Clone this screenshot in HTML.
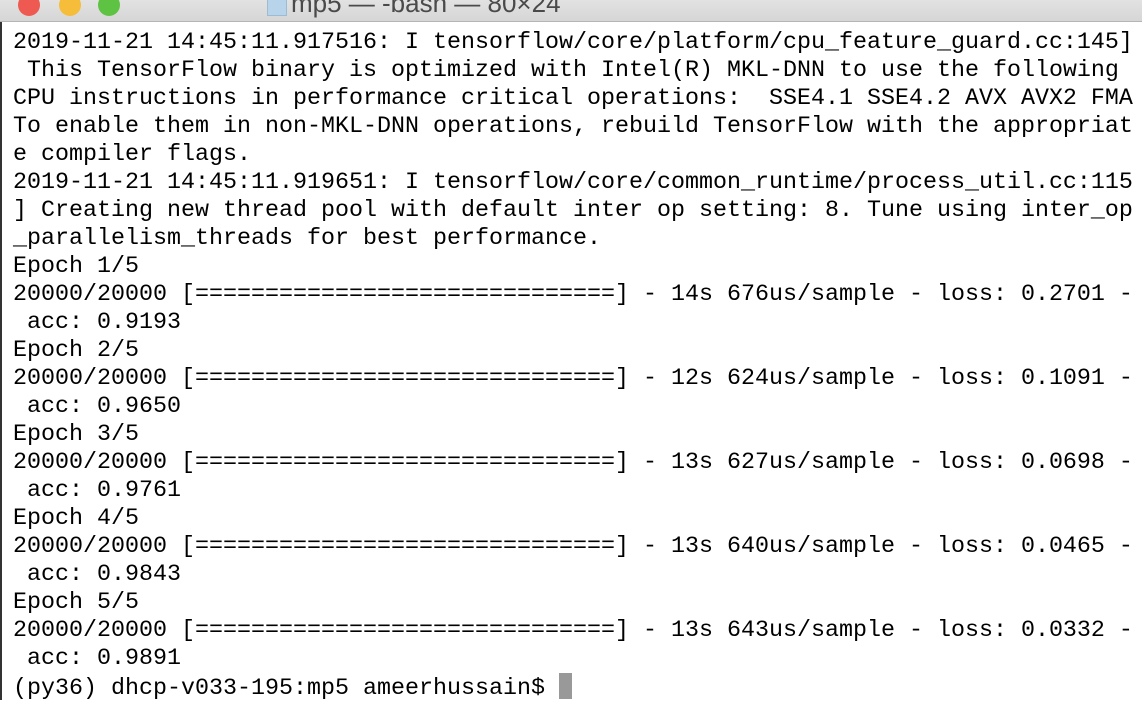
<!DOCTYPE html><html><head><style>
html,body{margin:0;padding:0;width:1142px;height:700px;overflow:hidden;background:#fff}
.bar{position:absolute;left:0;top:0;width:1142px;height:21px;background:linear-gradient(#e2e2e2,#d6d6d6);border-bottom:1px solid #b5b5b5}
.dot{position:absolute;top:-6px;width:22px;height:22px;border-radius:50%}
.title{position:absolute;left:267px;top:-12px;font:26px "Liberation Sans",sans-serif;color:#4a4a4a;white-space:nowrap}
.title i{display:inline-block;width:18px;height:22px;background:#b7d4ea;border:1px solid #9cbcd6;margin-right:4px;vertical-align:-4px}
.lb{position:absolute;left:0;top:22px;width:2px;height:678px;background:#333}
pre{position:absolute;left:13px;top:29px;margin:0;font:23.33px/28px "Liberation Mono",monospace;color:#000;letter-spacing:0}
.cur{display:inline-block;width:13px;height:26px;background:#999;vertical-align:-5px}
</style></head><body>
<div class="bar"><div class="dot" style="left:18px;background:#ee5a52"></div><div class="dot" style="left:59px;background:#f5bd3a"></div><div class="dot" style="left:98px;background:#5ec343"></div>
<div class="title"><i></i>mp5 — -bash — 80×24</div></div>
<div class="lb"></div>
<pre>2019-11-21 14:45:11.917516: I tensorflow/core/platform/cpu_feature_guard.cc:145]
 This TensorFlow binary is optimized with Intel(R) MKL-DNN to use the following
CPU instructions in performance critical operations:  SSE4.1 SSE4.2 AVX AVX2 FMA
To enable them in non-MKL-DNN operations, rebuild TensorFlow with the appropriat
e compiler flags.
2019-11-21 14:45:11.919651: I tensorflow/core/common_runtime/process_util.cc:115
] Creating new thread pool with default inter op setting: 8. Tune using inter_op
_parallelism_threads for best performance.
Epoch 1/5
20000/20000 [==============================] - 14s 676us/sample - loss: 0.2701 -
 acc: 0.9193
Epoch 2/5
20000/20000 [==============================] - 12s 624us/sample - loss: 0.1091 -
 acc: 0.9650
Epoch 3/5
20000/20000 [==============================] - 13s 627us/sample - loss: 0.0698 -
 acc: 0.9761
Epoch 4/5
20000/20000 [==============================] - 13s 640us/sample - loss: 0.0465 -
 acc: 0.9843
Epoch 5/5
20000/20000 [==============================] - 13s 643us/sample - loss: 0.0332 -
 acc: 0.9891
(py36) dhcp-v033-195:mp5 ameerhussain$ <span class="cur"></span></pre>
</body></html>
